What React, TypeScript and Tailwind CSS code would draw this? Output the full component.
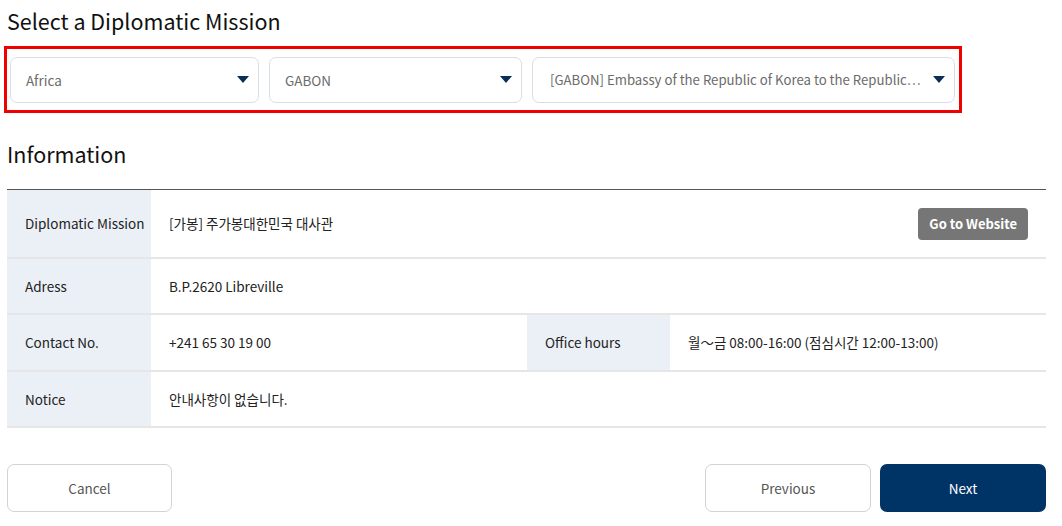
import React from "react";

const font = { fontFamily: '"Noto Sans CJK KR", "Noto Sans", sans-serif' };

function Caret() {
  return (
    <svg width="12" height="8" viewBox="0 0 12 8" className="shrink-0">
      <path d="M0 0 L12 0 L6 7 Z" fill="#0b2e59" />
    </svg>
  );
}

function Select({ text, className, textClass = "text-[13.5px]" }: { text: string; className: string; textClass?: string }) {
  return (
    <div
      className={`h-[46px] rounded-[7px] border border-[#d9dee5] bg-white flex items-center pl-[15px] pr-[9px] gap-1 ${className}`}
    >
      <span className={`flex-1 whitespace-nowrap ${textClass} text-[#6b6b6b]`}>{text}</span>
      <Caret />
    </div>
  );
}

function Label({ children }: { children: React.ReactNode }) {
  return (
    <div className="bg-[#ebf0f7] flex items-center pl-[18px] text-[13.5px] text-[#222]">{children}</div>
  );
}

function Value({ children, className = "" }: { children: React.ReactNode; className?: string }) {
  return (
    <div className={`flex items-center pl-[18px] text-[13.5px] text-[#222] ${className}`}>{children}</div>
  );
}

export default function App() {
  return (
    <div style={font} className="w-[1062px] h-[526px] bg-white overflow-hidden">
      <div className="pl-[7px] pr-[16px]">
        <h1 className="text-[21.5px] leading-[30px] pt-[6px] text-[#111] font-normal">Select a Diplomatic Mission</h1>
        <div className="mt-[10px] -ml-[3px] w-[958px] border-[3px] border-[#f00000] pl-[3px] pr-[4px] pt-[8px] pb-[7px] flex gap-[10px]">
          <Select text="Africa" className="w-[249px]" />
          <Select text="GABON" className="w-[253px]" />
          <Select
            text="[GABON] Embassy of the Republic of Korea to the Republic⋯"
            className="flex-1 min-w-0 !pl-[17px]"
            textClass="text-[13.2px]"
          />
        </div>
        <h2 className="text-[21.5px] leading-[30px] mt-[26px] text-[#111] font-normal">Information</h2>
        <div className="mt-[20px] border-t border-[#555]">
          <div className="grid grid-cols-[144px_376px_143px_1fr] h-[69px] border-b-2 border-[#e6e6e6]">
            <Label>Diplomatic Mission</Label>
            <div className="col-span-3 flex items-center justify-between pl-[18px] pr-[18px] text-[13.5px] text-[#222]">
              <span>[가봉] 주가봉대한민국 대사관</span>
              <button className="h-[32px] px-[11px] rounded-[4px] bg-[#767676] text-white text-[13px] font-bold">
                Go to Website
              </button>
            </div>
          </div>
          <div className="grid grid-cols-[144px_1fr] h-[56px] border-b-2 border-[#e6e6e6]">
            <Label>Adress</Label>
            <Value>B.P.2620 Libreville</Value>
          </div>
          <div className="grid grid-cols-[144px_376px_143px_1fr] h-[57px] border-b-2 border-[#e6e6e6]">
            <Label>Contact No.</Label>
            <Value>+241 65 30 19 00</Value>
            <Label>Office hours</Label>
            <Value>월～금 08:00-16:00 (점심시간 12:00-13:00)</Value>
          </div>
          <div className="grid grid-cols-[144px_1fr] h-[56px] border-b-2 border-[#e6e6e6]">
            <Label>Notice</Label>
            <Value>안내사항이 없습니다.</Value>
          </div>
        </div>
        <div className="mt-[36px] flex items-center">
          <button className="w-[165px] h-[48px] rounded-[7px] border border-[#d3d3d3] bg-white text-[13.5px] text-[#555]">
            Cancel
          </button>
          <div className="flex-1" />
          <button className="w-[166px] h-[48px] rounded-[7px] border border-[#d3d3d3] bg-white text-[13.5px] text-[#555]">
            Previous
          </button>
          <button className="ml-[9px] w-[166px] h-[48px] rounded-[7px] bg-[#003366] text-[13.5px] text-white">
            Next
          </button>
        </div>
      </div>
    </div>
  );
}
